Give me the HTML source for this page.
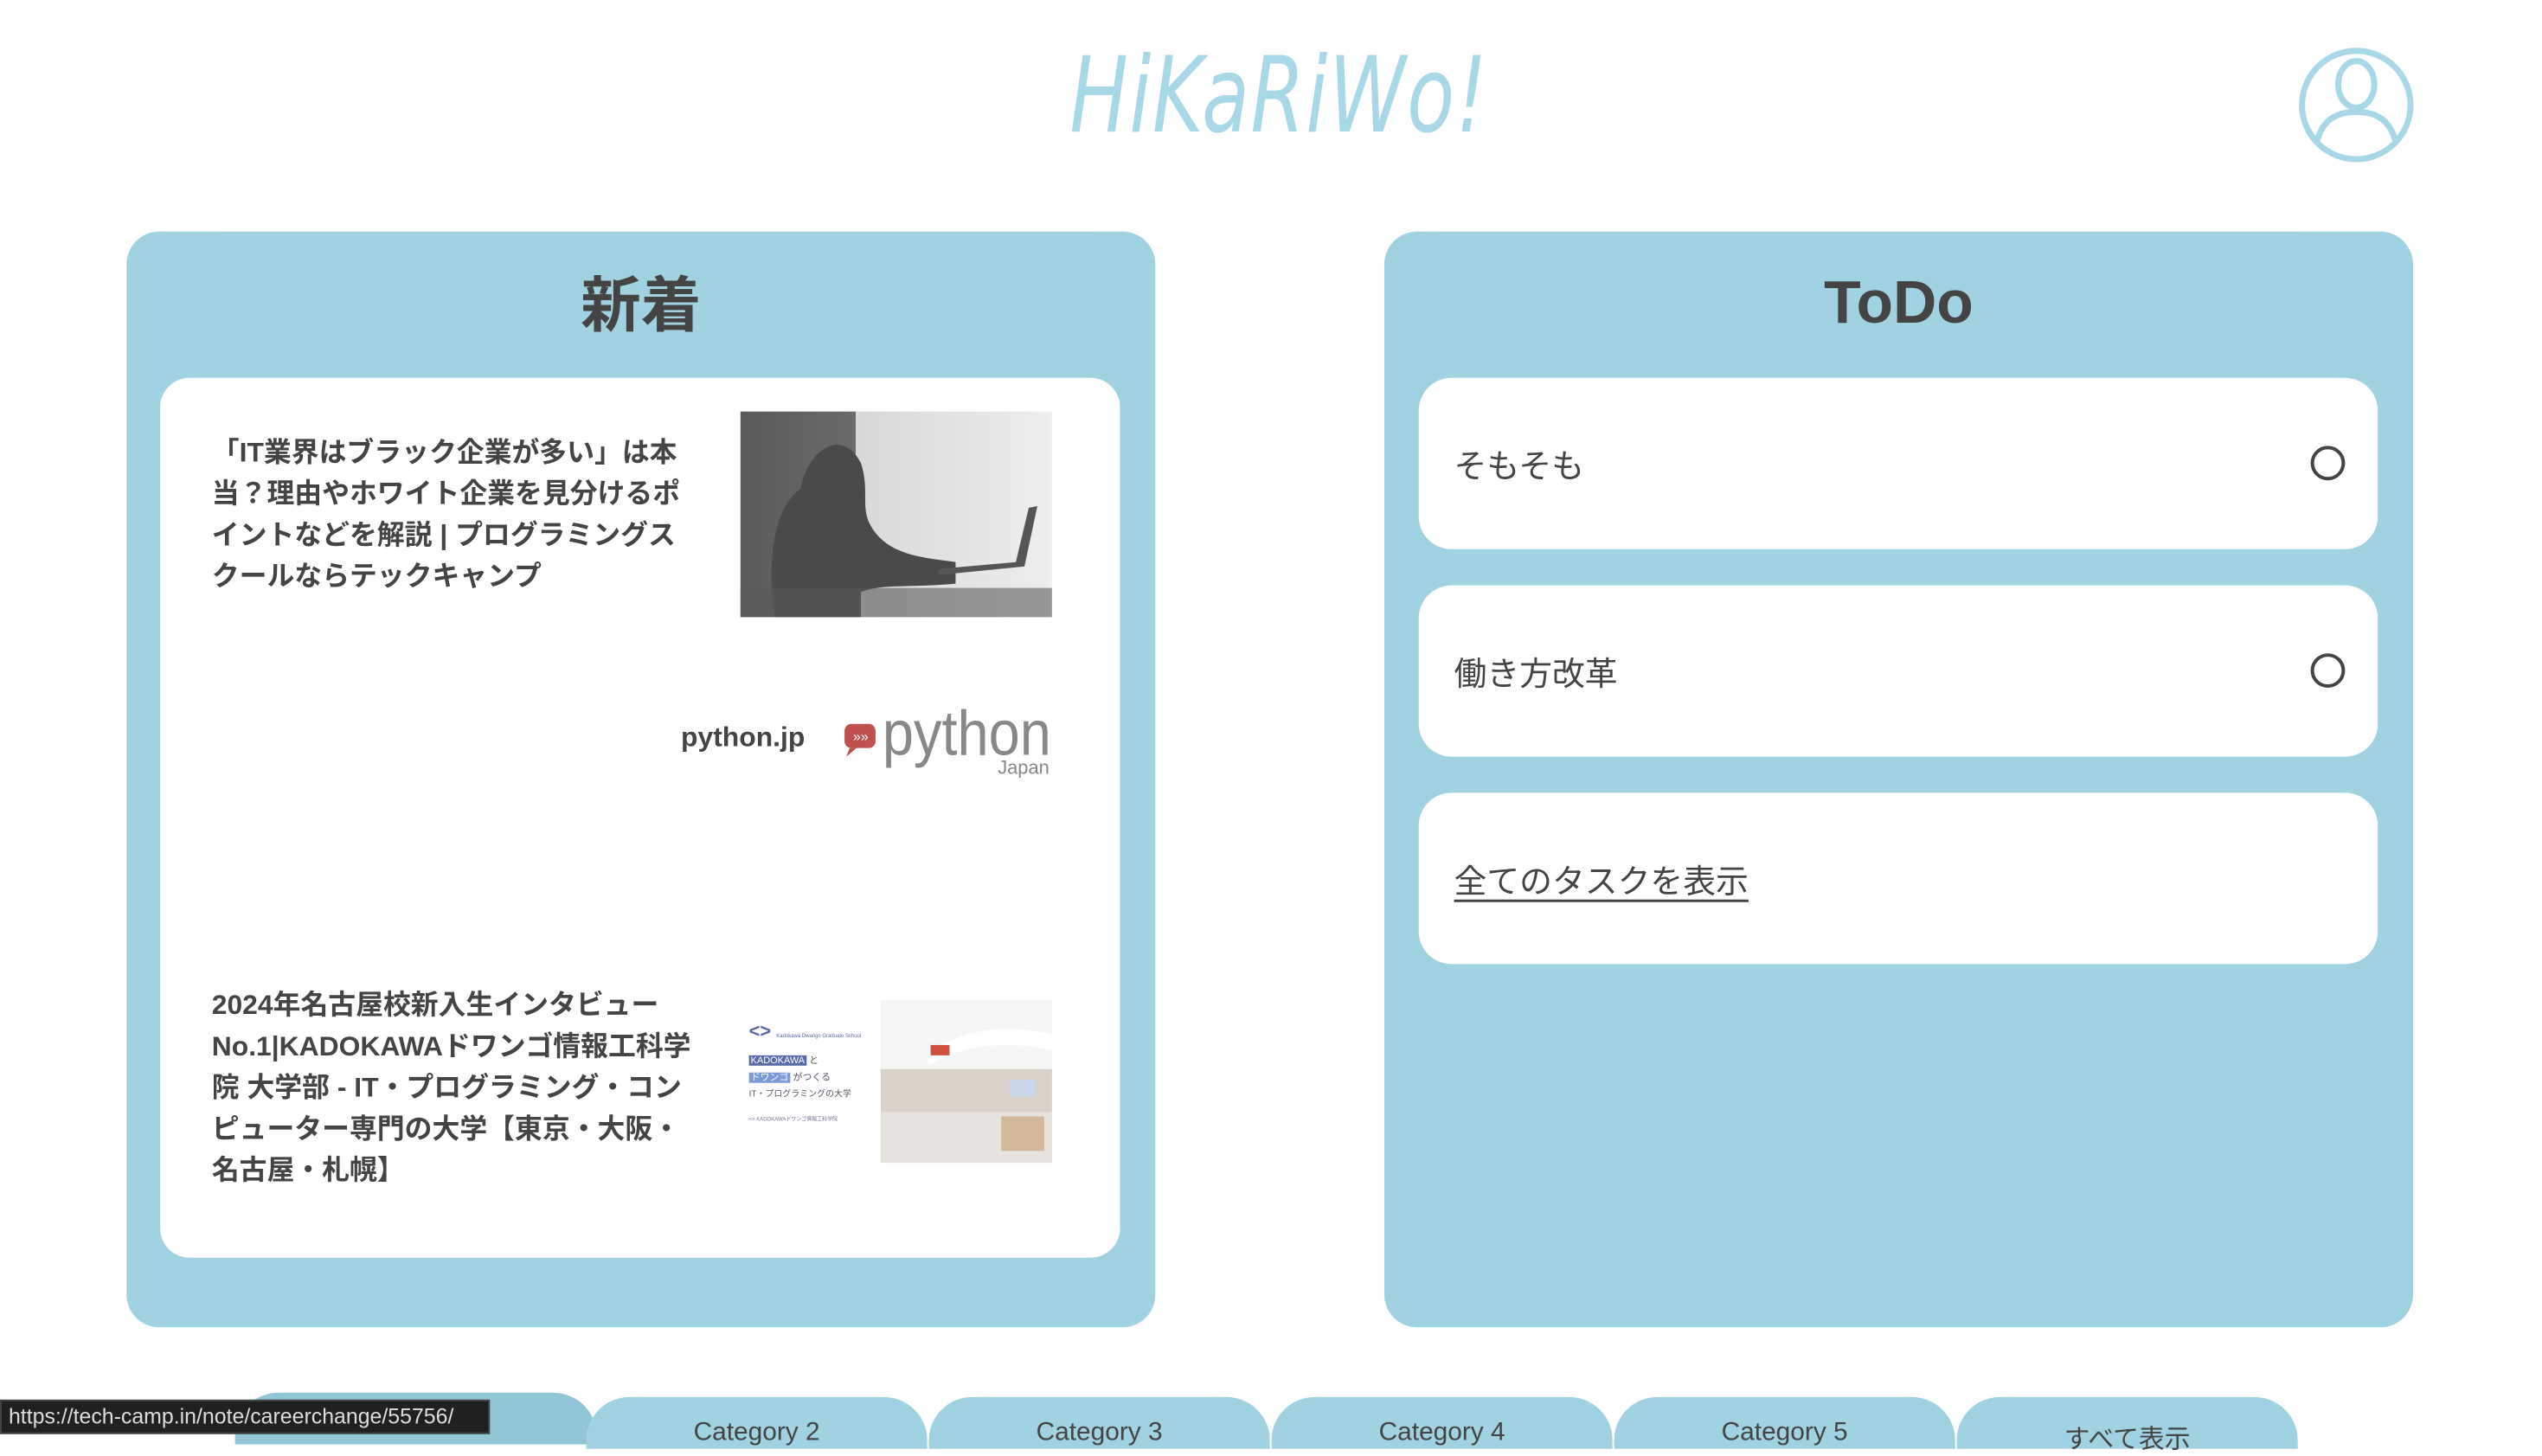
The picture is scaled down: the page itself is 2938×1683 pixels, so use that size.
<!DOCTYPE html>
<html><head><meta charset="utf-8"><style>
*{margin:0;padding:0;box-sizing:border-box}
html,body{width:2938px;height:1658px;overflow:hidden;background:#fff;font-family:"Liberation Sans","Noto Sans CJK JP",sans-serif;color:#444}
#w{position:absolute;left:0;top:0;width:2953px;height:1666px;transform:scale(0.995);transform-origin:0 0}
.abs{position:absolute}
.logo{left:1175px;top:40px;width:520px;text-align:center;font-family:"DejaVu Sans","Liberation Sans",sans-serif;font-style:italic;font-weight:300;font-size:122px;color:#a8d7e7;transform:scaleX(0.74);letter-spacing:2px}
.panel{background:#a0d2e2;border-radius:38px;top:269px;height:1273px;width:1195px}
.ptitle{position:absolute;font-size:70px;font-weight:bold;text-align:center;width:1195px;color:#444}
.card{background:#fff;border-radius:34px}
.art{font-size:32px;font-weight:bold;line-height:48px;color:#444}
.todo{left:1648px;width:1114px;height:199px;background:#fff;border-radius:38px}
.todo span{position:absolute;left:41px;top:72px;font-size:38px;color:#444}
.todo i{position:absolute;left:1036px;top:79px;width:40px;height:40px;border:4px solid #444;border-radius:50%}
.tab{top:1623px;height:60px;width:396px;background:#a0d2e2;border-radius:50px 50px 0 0;text-align:center;font-size:30px;color:#444;padding-top:24px}
</style></head><body><div id="w">
<div class="abs logo">HiKaRiWo!</div>
<svg class="abs" style="left:2669px;top:54px" width="136" height="136" viewBox="0 0 136 136"><g fill="none" stroke="#a8d7e7" stroke-width="7"><circle cx="68" cy="68" r="63"/><ellipse cx="68" cy="44" rx="21" ry="27"/><path d="M22 112 C28 86 44 76 68 76 C92 76 108 86 114 112"/></g></svg>

<div class="abs panel" style="left:147px"><div class="ptitle" style="top:30px">新着</div></div>
<div class="abs panel" style="left:1608px"><div class="ptitle" style="top:42px">ToDo</div></div>

<div class="abs card" style="left:186px;top:439px;width:1115px;height:1022px"></div>
<div class="abs art" style="left:246px;top:501px;width:570px">「IT業界はブラック企業が多い」は本当？理由やホワイト企業を見分けるポイントなどを解説 | プログラミングスクールならテックキャンプ</div>
<svg class="abs" style="left:860px;top:478px" width="362" height="239" viewBox="0 0 362 239">
<defs><linearGradient id="g1" x1="0" x2="1"><stop offset="0" stop-color="#5a5a5a"/><stop offset="0.37" stop-color="#6a6a6a"/><stop offset="0.37" stop-color="#d8d8d8"/><stop offset="1" stop-color="#eeeeee"/></linearGradient></defs>
<rect width="362" height="239" fill="url(#g1)"/>
<path d="M40 239 C30 170 40 110 70 90 C80 40 120 20 140 60 C150 90 140 110 150 130 C170 170 220 170 250 175 L250 200 C200 205 160 200 140 210 L140 239Z" fill="#4a4a4a"/>
<path d="M230 190 L330 180 L345 110 L335 112 L320 175 L230 183Z" fill="#555"/>
<rect x="0" y="205" width="362" height="34" fill="#5a5a5a" opacity=".6"/>
</svg>
<div class="abs" style="left:791px;top:838px;font-size:32px;font-weight:bold;color:#444">python.jp</div>
<svg class="abs" style="left:979px;top:815px" width="245" height="90" viewBox="0 0 245 90">
<rect x="2" y="26" width="36" height="28" rx="8" fill="#c0504d"/><path d="M8 54 L4 64 L16 54Z" fill="#c0504d"/>
<text x="12" y="46" font-size="16" fill="#fff" font-family="Liberation Sans">»»</text>
<text x="46" y="62" font-size="74" fill="#888" font-family="Liberation Sans" textLength="196" lengthAdjust="spacingAndGlyphs">python</text>
<text x="180" y="84" font-size="22" fill="#888" font-family="Liberation Sans">Japan</text>
</svg>

<div class="abs art" style="left:246px;top:1143px;width:562px">2024年名古屋校新入生インタビューNo.1|KADOKAWAドワンゴ情報工科学院 大学部 - IT・プログラミング・コンピューター専門の大学【東京・大阪・名古屋・札幌】</div>
<div class="abs" style="left:870px;top:1185px;width:150px;font-family:'Liberation Sans','Noto Sans CJK JP',sans-serif">
<div style="color:#5a6aa8;font-weight:bold;font-size:22px">&lt;&gt; <span style="font-size:6px;font-weight:normal">Kadokawa Dwango Graduate School</span></div>
<div style="margin-top:12px;font-size:11px;color:#556"><span style="background:#5a6aa8;color:#fff;padding:0 2px">KADOKAWA</span> と</div>
<div style="margin-top:4px;font-size:11px;color:#556"><span style="background:#7a9ad8;color:#fff;padding:0 2px">ドワンゴ</span> がつくる</div>
<div style="margin-top:3px;font-size:10px;color:#556">IT・プログラミングの大学</div>
<div style="margin-top:18px;font-size:6px;color:#779">&lt;&gt; KADOKAWAドワンゴ情報工科学院</div>
</div>
<svg class="abs" style="left:1023px;top:1162px" width="199" height="189" viewBox="0 0 199 189">
<rect width="199" height="189" fill="#eeeae6"/><rect y="0" width="199" height="80" fill="#f6f6f6"/>
<path d="M55 60 Q120 20 199 40 L199 58 Q120 40 55 75Z" fill="#fff"/><rect x="58" y="52" width="22" height="12" fill="#d05040"/>
<rect x="0" y="80" width="199" height="50" fill="#d8d2c8"/><rect x="150" y="92" width="30" height="20" fill="#c8d8e8"/>
<rect x="0" y="130" width="199" height="59" fill="#e6e2de"/><rect x="140" y="135" width="50" height="40" fill="#c9a880" opacity=".7"/>
</svg>

<div class="abs todo" style="top:439px"><span>そもそも</span><i></i></div>
<div class="abs todo" style="top:680px"><span>働き方改革</span><i></i></div>
<div class="abs todo" style="top:921px"><span style="text-decoration:underline;text-underline-offset:8px">全てのタスクを表示</span></div>

<div class="abs tab" style="left:273px;top:1618px;width:420px;background:#92c6d6"></div>
<div class="abs tab" style="left:681px">Category 2</div>
<div class="abs tab" style="left:1079px">Category 3</div>
<div class="abs tab" style="left:1477px">Category 4</div>
<div class="abs tab" style="left:1875px">Category 5</div>
<div class="abs tab" style="left:2273px">すべて表示</div>
<div class="abs" style="left:0;top:1626px;width:569px;height:40px;background:#1f2020;color:#ddd;font-size:25px;padding:4px 0 0 8px;border:2px solid #444">https://tech-camp.in/note/careerchange/55756/</div>
</div></body></html>
